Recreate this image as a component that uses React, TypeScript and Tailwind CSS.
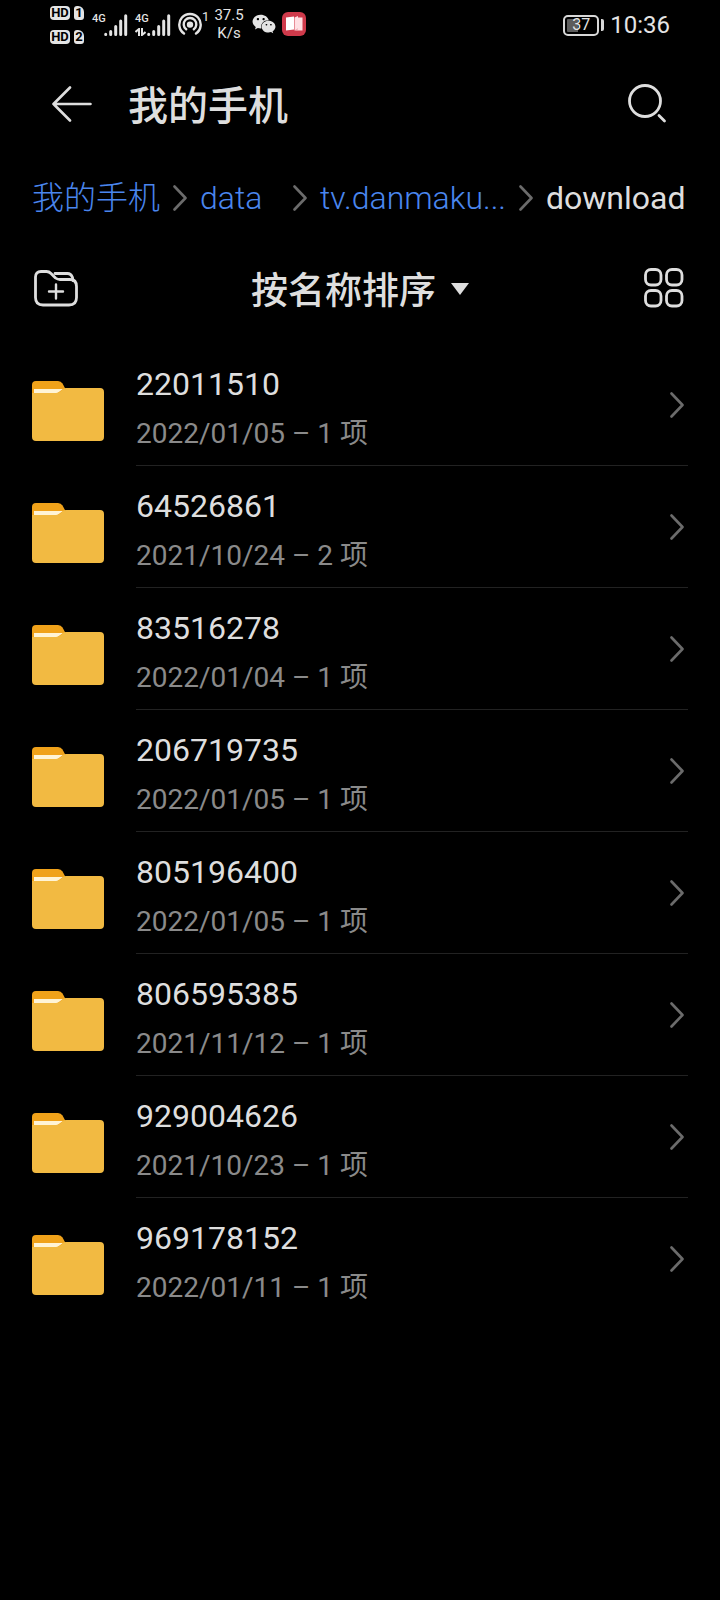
import { FaWeixin } from "react-icons/fa";

interface Folder {
  name: string;
  date: string;
  count: number;
}

const folders: Folder[] = [
  { name: "22011510", date: "2022/01/05", count: 1 },
  { name: "64526861", date: "2021/10/24", count: 2 },
  { name: "83516278", date: "2022/01/04", count: 1 },
  { name: "206719735", date: "2022/01/05", count: 1 },
  { name: "805196400", date: "2022/01/05", count: 1 },
  { name: "806595385", date: "2021/11/12", count: 1 },
  { name: "929004626", date: "2021/10/23", count: 1 },
  { name: "969178152", date: "2022/01/11", count: 1 },
];

const parents = ["我的手机", "data", "tv.danmaku..."];

function Chevron() {
  return (
    <svg
      className="h-[26px] w-[14px] shrink-0 text-[#6b6b6b]"
      viewBox="0 0 14 26"
      fill="none"
      stroke="currentColor"
      strokeWidth="2.6"
      strokeLinecap="round"
      strokeLinejoin="round"
    >
      <path d="M1.5 1.5L12.5 13L1.5 24.5" />
    </svg>
  );
}

function SimBadge({ slot }: { slot: string }) {
  return (
    <div className="flex h-[14px] gap-1 text-[13px] leading-[14px] font-bold text-black">
      <span className="w-5 rounded-[4px] bg-[#e4e4e4] text-center">HD</span>
      <span className="w-[10px] rounded-[3px] rounded-tr-[6px] bg-[#e4e4e4] text-center">
        {slot}
      </span>
    </div>
  );
}

function Signal({ data }: { data?: boolean }) {
  return (
    <div className="flex h-6 items-end">
      <div className="flex h-6 w-3 flex-col justify-between">
        <span className="text-[11px] leading-[14px] font-medium">4G</span>
        {data && (
          <svg
            className="h-2 w-[11px]"
            viewBox="0 0 11 8"
            fill="none"
            stroke="currentColor"
            strokeWidth="2"
          >
            <path d="M0.5 4L4 1V8M7 0V7L10.5 4" />
          </svg>
        )}
      </div>
      <svg
        className="h-[22px] w-6"
        viewBox="0 0 24 22"
        stroke="currentColor"
        strokeWidth="3"
        strokeLinecap="round"
      >
        <path d="M1.7 20.3V20.4M6.7 17.5V20.4M11.7 12.5V20.4M16.7 7V20.4M21.7 1.7V20.4" />
      </svg>
    </div>
  );
}

function StatusBar() {
  return (
    <div className="flex h-12 items-center justify-between px-[50px] text-[#e4e4e4]">
      <div className="flex items-center">
        <div className="flex flex-col gap-[10px] pt-[2px]">
          <SimBadge slot="1" />
          <SimBadge slot="2" />
        </div>
        <div className="ml-2 flex gap-[7px]">
          <Signal />
          <Signal data />
        </div>
        <svg
          className="ml-[7px] size-6"
          viewBox="0 0 24 24"
          fill="none"
          stroke="currentColor"
          strokeWidth="2.4"
          strokeLinecap="round"
        >
          <path d="M6 21.5A10.7 10.7 0 1 1 18 21.5" />
          <path d="M8.2 17.3A6.3 6.3 0 1 1 15.8 17.3" />
          <circle cx="12" cy="12.6" r="2" fill="currentColor" />
        </svg>
        <span className="h-6 w-2 text-[13px] leading-[10px]">1</span>
        <div className="ml-[3px] flex w-8 flex-col text-center text-[15px] leading-[18px]">
          <span>37.5</span>
          <span>K/s</span>
        </div>
        <FaWeixin className="ml-[7px] size-6" />
        <svg className="ml-[6px] size-6" viewBox="0 0 24 24">
          <rect width="24" height="24" rx="6" fill="#cf3a4b" />
          <path d="M4 5.5L12 4.5V17.5L4 18.5Z" fill="#fff" />
          <path
            d="M12.5 5.5L16 4V16.5L12.5 18.5ZM16 5.5H20.5V18.5H12.5L16 17Z"
            fill="#ffdfe3"
          />
        </svg>
      </div>
      <div className="flex items-center pt-[2px]">
        <div className="flex h-[21px] w-9 items-center justify-center rounded-[5px] border-2 border-[#d8d8d8] bg-linear-to-r from-[#5c5c5c] from-40% to-black to-40% bg-clip-content p-[2px] text-[16px] leading-4">
          37
        </div>
        <div className="ml-[2px] h-3 w-[3px] rounded-r-[2px] bg-[#d8d8d8]" />
        <span className="ml-[6px] text-2xl leading-8">10:36</span>
      </div>
    </div>
  );
}

function FolderIcon() {
  return (
    <svg className="size-[72px] shrink-0" viewBox="0 0 72 72">
      <path
        d="M0 16Q0 12 4 12H26Q29 12 30.5 14.5L34 21V30H0Z"
        fill="#f0a21a"
      />
      <path d="M2 20H31L24 25H2Z" fill="#fff4d6" />
      <path
        d="M0 24H24Q27 24 29 22L31 20Q32 19 34 19H68Q72 19 72 23V68Q72 72 68 72H4Q0 72 0 68Z"
        fill="#f2ba42"
      />
    </svg>
  );
}

function FolderRow({ folder }: { folder: Folder }) {
  return (
    <li className="group">
      <a href="#" className="flex h-[122px] items-stretch">
        <div className="flex items-center">
          <FolderIcon />
        </div>
        <div className="ml-8 flex min-w-0 flex-1 items-center justify-between border-b border-[#222222] pr-1 group-last:border-transparent">
          <div className="pt-2">
            <div className="text-[32px] leading-[50px]">{folder.name}</div>
            <div className="text-[28px] leading-[50px] text-[#8a8a8a]">
              {folder.date} – {folder.count} 项
            </div>
          </div>
          <Chevron />
        </div>
      </a>
    </li>
  );
}

function App() {
  return (
    <div className="min-h-screen bg-black font-[Roboto,'Noto_Sans_CJK_SC',sans-serif] text-[#dedede]">
      <StatusBar />

      <header className="flex h-28 items-center px-[52px]">
        <button type="button" aria-label="返回">
          <svg
            className="h-9 w-10"
            viewBox="0 0 40 36"
            fill="none"
            stroke="currentColor"
            strokeWidth="2.6"
            strokeLinecap="round"
            strokeLinejoin="round"
          >
            <path d="M18 1.5L1.5 18L18 34.5M1.5 18H38.5" />
          </svg>
        </button>
        <h1 className="ml-9 flex-1 pt-[6px] text-[40px] leading-12 font-medium">
          我的手机
        </h1>
        <button type="button" aria-label="搜索">
          <svg
            className="size-10"
            viewBox="0 0 40 40"
            fill="none"
            stroke="currentColor"
            strokeWidth="2.8"
            strokeLinecap="round"
          >
            <circle cx="17" cy="17" r="15.5" />
            <path d="M31 31.5L36.5 37" />
          </svg>
        </button>
      </header>

      <nav className="flex h-[74px] items-center px-8 pt-[2px] text-[32px] leading-10 whitespace-nowrap">
        {parents.map((name) => (
          <div key={name} className="flex items-center">
            <a href="#" className="min-w-20 font-light text-[#4a86ee]">
              {name}
            </a>
            <div className="mx-[13px] flex">
              <Chevron />
            </div>
          </div>
        ))}
        <span>download</span>
      </nav>

      <div className="flex h-[110px] items-center justify-between px-8">
        <button type="button" aria-label="新建文件夹">
          <svg
            className="h-10 w-12"
            viewBox="0 0 48 40"
            fill="none"
            stroke="currentColor"
            strokeWidth="2.8"
            strokeLinecap="round"
            strokeLinejoin="round"
          >
            <path d="M9 2.5H14.5Q17 2.5 19 4.5L23.5 9Q25.5 10.5 28 10.5H38Q44.5 10.5 44.5 17.5V28.5Q44.5 36 37 36H11Q3.5 36 3.5 28.5V8Q3.5 2.5 9 2.5Z" />
            <path d="M23 4.5H35.5Q39 4.5 40.5 8.5L41 11.5" />
            <path d="M17 22.5H31M24 15.5V29.5" strokeWidth="2.4" />
          </svg>
        </button>
        <button
          type="button"
          className="flex items-center gap-[15px] text-[37px] leading-12 font-medium"
        >
          <span className="pt-[5px]">按名称排序</span>
          <svg className="h-3 w-[18px]" viewBox="0 0 18 12" fill="currentColor">
            <path d="M0 0H18L9 12Z" />
          </svg>
        </button>
        <button type="button" aria-label="网格视图">
          <svg
            className="size-12"
            viewBox="0 0 48 48"
            fill="none"
            stroke="currentColor"
            strokeWidth="2.8"
          >
            <rect x="5.5" y="4.5" width="15.5" height="15.5" rx="5.5" />
            <rect x="26.5" y="4.5" width="15.5" height="15.5" rx="5.5" />
            <rect x="5.5" y="25.5" width="15.5" height="15.5" rx="5.5" />
            <rect x="26.5" y="25.5" width="15.5" height="15.5" rx="5.5" />
          </svg>
        </button>
      </div>

      <ul className="px-8">
        {folders.map((folder) => (
          <FolderRow key={folder.name} folder={folder} />
        ))}
      </ul>
    </div>
  );
}

export default App;
